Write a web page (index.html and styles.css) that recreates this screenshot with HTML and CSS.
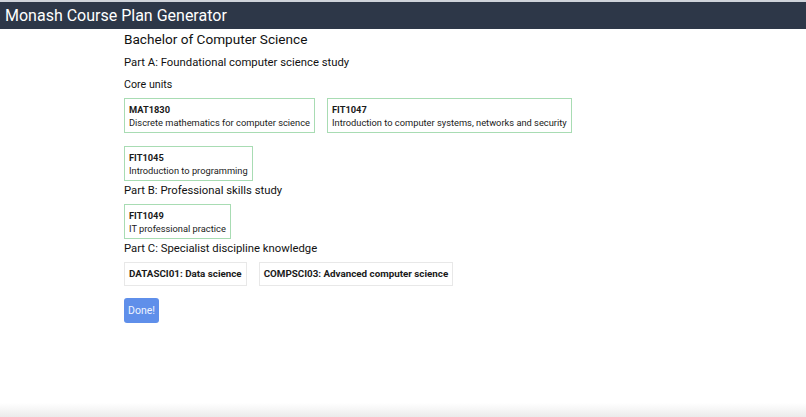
FILE: index.html
```html
<!DOCTYPE html>
<html lang="en">
<head>
<meta charset="utf-8">
<title>Monash Course Plan Generator</title>
<link rel="stylesheet" href="styles.css">
</head>
<body>
<header class="topbar">Monash Course Plan Generator</header>
<main class="content">
  <h1 class="course-title">Bachelor of Computer Science</h1>

  <h2 class="part-title part-a">Part A: Foundational computer science study</h2>
  <h3 class="group-title">Core units</h3>
  <div class="unit-grid">
    <div class="unit-card">
      <div class="unit-code">MAT1830</div>
      <div class="unit-name">Discrete mathematics for computer science</div>
    </div>
    <div class="unit-card">
      <div class="unit-code">FIT1047</div>
      <div class="unit-name">Introduction to computer systems, networks and security</div>
    </div>
    <div class="unit-card">
      <div class="unit-code">FIT1045</div>
      <div class="unit-name">Introduction to programming</div>
    </div>
  </div>

  <h2 class="part-title">Part B: Professional skills study</h2>
  <div class="unit-grid single">
    <div class="unit-card">
      <div class="unit-code">FIT1049</div>
      <div class="unit-name">IT professional practice</div>
    </div>
  </div>

  <h2 class="part-title">Part C: Specialist discipline knowledge</h2>
  <div class="spec-row">
    <div class="spec-box">DATASCI01: Data science</div>
    <div class="spec-box">COMPSCI03: Advanced computer science</div>
  </div>

  <button class="done-btn" type="button">Done!</button>
</main>
</body>
</html>
```

FILE: styles.css
```css
html {
  height: 100%;
  background: linear-gradient(to bottom, #ffffff calc(100% - 14px), #ebebeb 100%);
}

body {
  margin: 0;
  font-family: Roboto, "Liberation Sans", Arial, sans-serif;
  color: #1a1a1a;
}

.topbar {
  height: 26px;
  padding-top: 1px;
  border-top: 2px solid #cfd3da;
  background: #2d3748;
  color: #ffffff;
  font-size: 16px;
  line-height: 26px;
  padding-left: 5px;
}

.content {
  margin-left: 124px;
}

.course-title {
  margin: 0;
  padding-top: 1px;
  font-size: 13.6px;
  line-height: 19px;
  font-weight: normal;
  color: #111;
}

.part-title {
  margin: 0;
  padding-top: 2px;
  font-size: 11.3px;
  line-height: 16px;
  font-weight: normal;
  color: #111;
}

.part-title.part-a {
  margin-top: 4px;
  padding-top: 1px;
  line-height: 17px;
}

.group-title {
  margin: 5px 0 0;
  padding-top: 1px;
  font-size: 10.7px;
  line-height: 15px;
  font-weight: normal;
  color: #111;
}

.unit-grid {
  display: flex;
  flex-wrap: wrap;
  column-gap: 12px;
  row-gap: 13px;
  margin-top: 6px;
  max-width: 470px;
}

.unit-grid.single {
  margin-top: 5px;
}

.unit-card {
  border: 1px solid #a8dcb3;
  padding: 4px 4px 3px;
  font-size: 9.3px;
  line-height: 13px;
  color: #1a1a1a;
}

.unit-code {
  font-weight: bold;
}

.spec-row {
  display: flex;
  column-gap: 12px;
  margin-top: 5px;
}

.spec-box {
  border: 1px solid #e8e8e8;
  padding: 4px;
  font-size: 9.8px;
  line-height: 14px;
  font-weight: bold;
  color: #1a1a1a;
}

.done-btn {
  display: block;
  margin-top: 12px;
  height: 25px;
  padding: 0 4px;
  border: none;
  border-radius: 3px;
  background: #5f8fea;
  color: #eef3ff;
  font-family: Roboto, "Liberation Sans", Arial, sans-serif;
  font-size: 10.5px;
}
```
